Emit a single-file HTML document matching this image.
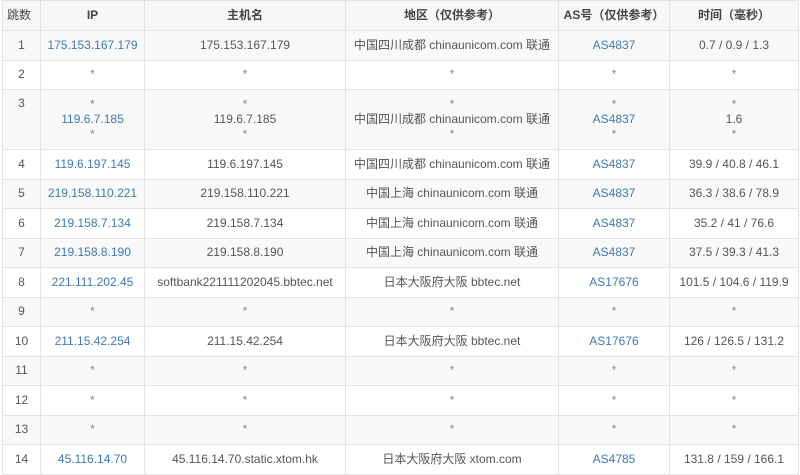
<!DOCTYPE html><html><head><meta charset="utf-8"><style>
body{margin:0;width:800px;height:475px;background:#fff;overflow:hidden;font-family:"Liberation Sans","Noto Sans CJK SC",sans-serif;font-size:12px;color:#555}
table{position:absolute;left:2px;top:0;border-collapse:collapse;table-layout:fixed;width:796px}
td,th{border:1px solid #e3e3e3;text-align:center;padding:0;line-height:15px}
th{font-weight:bold;color:#444;height:29px;background:#f7f7f7}
tbody tr{height:29.5px}
tbody tr:nth-child(odd){background:#f9f9f9}
a{color:#3d7ab3;text-decoration:none}
.s{color:#888}
</style></head><body>
<table>
<colgroup><col style="width:38px"><col style="width:104px"><col style="width:201px"><col style="width:213px"><col style="width:111px"><col style="width:129px"></colgroup>
<thead><tr><th style="text-align:left;padding-left:4px;font-weight:normal">跳数</th><th>IP</th><th>主机名</th><th>地区（仅供参考）</th><th>AS号（仅供参考）</th><th>时间（毫秒）</th></tr></thead>
<tbody>
<tr><td>1</td><td><a>175.153.167.179</a></td><td>175.153.167.179</td><td>中国四川成都 chinaunicom.com 联通</td><td><a>AS4837</a></td><td>0.7 / 0.9 / 1.3</td></tr>
<tr><td>2</td><td class="s">*</td><td class="s">*</td><td class="s">*</td><td class="s">*</td><td class="s">*</td></tr>
<tr style="height:60px"><td style="vertical-align:top;padding-top:6px">3</td><td><span class="s">*</span><br><a>119.6.7.185</a><br><span class="s">*</span></td><td><span class="s">*</span><br>119.6.7.185<br><span class="s">*</span></td><td><span class="s">*</span><br>中国四川成都 chinaunicom.com 联通<br><span class="s">*</span></td><td><span class="s">*</span><br><a>AS4837</a><br><span class="s">*</span></td><td><span class="s">*</span><br>1.6<br><span class="s">*</span></td></tr>
<tr><td>4</td><td><a>119.6.197.145</a></td><td>119.6.197.145</td><td>中国四川成都 chinaunicom.com 联通</td><td><a>AS4837</a></td><td>39.9 / 40.8 / 46.1</td></tr>
<tr><td>5</td><td><a>219.158.110.221</a></td><td>219.158.110.221</td><td>中国上海 chinaunicom.com 联通</td><td><a>AS4837</a></td><td>36.3 / 38.6 / 78.9</td></tr>
<tr><td>6</td><td><a>219.158.7.134</a></td><td>219.158.7.134</td><td>中国上海 chinaunicom.com 联通</td><td><a>AS4837</a></td><td>35.2 / 41 / 76.6</td></tr>
<tr><td>7</td><td><a>219.158.8.190</a></td><td>219.158.8.190</td><td>中国上海 chinaunicom.com 联通</td><td><a>AS4837</a></td><td>37.5 / 39.3 / 41.3</td></tr>
<tr><td>8</td><td><a>221.111.202.45</a></td><td>softbank221111202045.bbtec.net</td><td>日本大阪府大阪 bbtec.net</td><td><a>AS17676</a></td><td>101.5 / 104.6 / 119.9</td></tr>
<tr><td>9</td><td class="s">*</td><td class="s">*</td><td class="s">*</td><td class="s">*</td><td class="s">*</td></tr>
<tr><td>10</td><td><a>211.15.42.254</a></td><td>211.15.42.254</td><td>日本大阪府大阪 bbtec.net</td><td><a>AS17676</a></td><td>126 / 126.5 / 131.2</td></tr>
<tr><td>11</td><td class="s">*</td><td class="s">*</td><td class="s">*</td><td class="s">*</td><td class="s">*</td></tr>
<tr><td>12</td><td class="s">*</td><td class="s">*</td><td class="s">*</td><td class="s">*</td><td class="s">*</td></tr>
<tr><td>13</td><td class="s">*</td><td class="s">*</td><td class="s">*</td><td class="s">*</td><td class="s">*</td></tr>
<tr><td>14</td><td><a>45.116.14.70</a></td><td>45.116.14.70.static.xtom.hk</td><td>日本大阪府大阪 xtom.com</td><td><a>AS4785</a></td><td>131.8 / 159 / 166.1</td></tr>
</tbody></table>
</body></html>
